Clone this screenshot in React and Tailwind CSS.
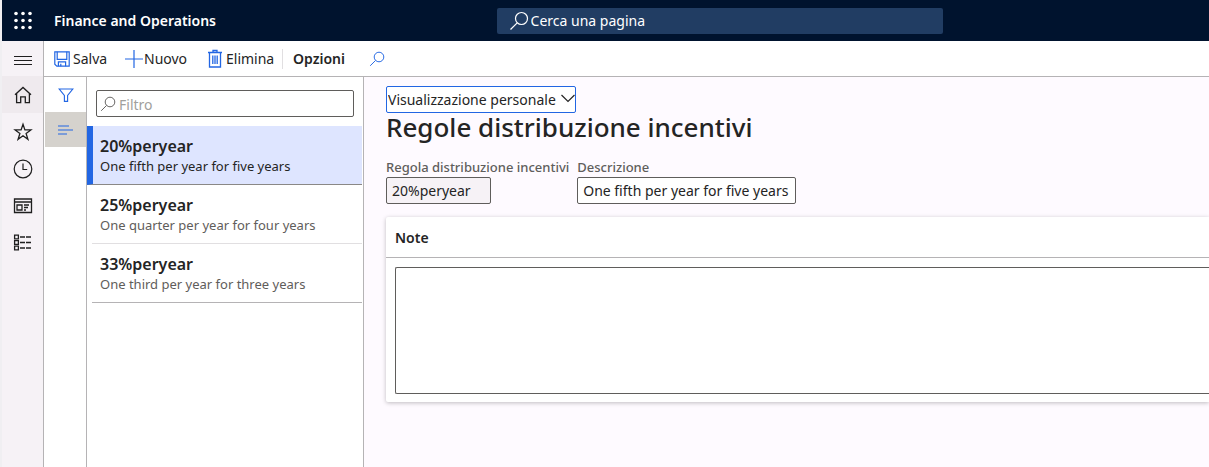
const navItems = [
    { label: 'Home', icon: HomeIcon, active: true },
    { label: 'Preferiti', icon: StarIcon },
    { label: 'Recenti', icon: ClockIcon },
    { label: 'Aree di lavoro', icon: WorkspaceIcon },
    { label: 'Moduli', icon: ModulesIcon },
];

const rules = [
    { id: '20%peryear', description: 'One fifth per year for five years' },
    { id: '25%peryear', description: 'One quarter per year for four years' },
    { id: '33%peryear', description: 'One third per year for three years' },
];

function Icon({ className = 'h-5 w-5', children, ...props }) {
    return (
        <svg
            viewBox="0 0 20 20"
            fill="none"
            stroke="currentColor"
            strokeWidth="1.2"
            aria-hidden="true"
            className={`shrink-0 ${className}`}
            {...props}
        >
            {children}
        </svg>
    );
}

function WaffleIcon() {
    return (
        <Icon fill="currentColor" stroke="none">
            {[2.5, 9.5, 16.5].map((y) =>
                [2, 9, 16].map((x) => <circle key={`${x}-${y}`} cx={x} cy={y} r="1.8" />)
            )}
        </Icon>
    );
}

function MenuIcon() {
    return (
        <Icon shapeRendering="crispEdges" strokeWidth="1">
            <path d="M1 7h18M1 11h18M1 15h18" />
        </Icon>
    );
}

function HomeIcon() {
    return (
        <Icon strokeWidth="1.3">
            <path d="M2 9.8 10 2.4l8 7.4" />
            <path d="M3.6 8.6v9h4.1v-5.8h4.6v5.8h4.1v-9" />
        </Icon>
    );
}

function StarIcon() {
    return (
        <Icon strokeWidth="1.3">
            <path d="m10 2.2 1.9 5.7h6l-4.8 3.6 1.8 5.8-4.9-3.6-4.9 3.6 1.8-5.8-4.8-3.6h6z" />
        </Icon>
    );
}

function ClockIcon() {
    return (
        <Icon>
            <circle cx="10" cy="10" r="8.8" />
            <path d="M10 4.5v6h4.2" />
        </Icon>
    );
}

function WorkspaceIcon() {
    return (
        <Icon strokeWidth="1.3">
            <path d="M1.5 3h17v13.5h-17zM1.5 6h17" />
            <path d="M4 9h5v5H4zM11 9h5M11 11.5h4M11 14h2" />
        </Icon>
    );
}

function ModulesIcon() {
    return (
        <Icon strokeWidth="1.3">
            <path d="M1.6 2.1h3.8v3.8H1.6zM1.6 7.6h3.8v3.8H1.6zM1.6 13.1h3.8v3.8H1.6z" />
            <path d="M7 4h5M13 4h5M7 9.5h5M13 9.5h5M7 15h5M13 15h5" />
        </Icon>
    );
}

function SearchIcon({ className }) {
    return (
        <Icon className={className}>
            <circle cx="12.5" cy="7.5" r="6" />
            <path d="M8.2 11.8 1.5 18.5" />
        </Icon>
    );
}

function SaveIcon() {
    return (
        <Icon className="h-4 w-4" strokeWidth="1.5">
            <path d="M1 1h18v18H3.5L1 16.5z" />
            <path d="M4 1v9.5h12V1M5.5 19v-5.5h9V19M8.5 19v-3" />
        </Icon>
    );
}

function PlusIcon() {
    return (
        <Icon>
            <path d="M1 10h18M10 1v18" />
        </Icon>
    );
}

function TrashIcon() {
    return (
        <Icon strokeWidth="1.3">
            <path d="M2 3.5h14M7 3.5v-2h4v2" />
            <path d="M3.5 3.5V18h11V3.500M6.8 6.5V15M9 6.500V15M11.2 6.500V15" />
        </Icon>
    );
}

function FilterIcon() {
    return (
        <Icon className="h-4 w-4" strokeWidth="1.4">
            <path d="M1.500 2.500h17L12 10.500v7.500H8v-7.500z" />
        </Icon>
    );
}

function LinesIcon() {
    return (
        <Icon className="h-4 w-4" viewBox="0 0 16 16" strokeWidth="1">
            <path d="M0 4h11M0 8h15M0 12h9" />
        </Icon>
    );
}

function TopBar() {
    return (
        <header className="flex h-[41px] items-center bg-[#00132e] pl-2 text-white">
            <div className="flex w-2/5 items-center">
                <button type="button" aria-label="App" className="flex w-7 justify-center">
                    <WaffleIcon />
                </button>
                <span className="ml-4 text-sm font-semibold">Finance and Operations</span>
            </div>
            <label className="ml-[7px] flex h-[26px] w-[446px] items-center rounded-xs bg-[#213d63] pl-3">
                <SearchIcon className="h-5 w-5" />
                <input
                    type="search"
                    aria-label="Cerca una pagina"
                    placeholder="Cerca una pagina"
                    className="ml-0.5 min-w-0 flex-1 bg-transparent text-sm outline-none placeholder:text-white"
                />
            </label>
        </header>
    );
}

function SideNav() {
    return (
        <nav className="flex w-[42px] shrink-0 flex-col border-r border-[#b5b3b5] bg-[#f6f2f6] text-[#1f1f1f]">
            <button type="button" aria-label="Menu" className="flex h-[35px] items-center justify-center">
                <MenuIcon />
            </button>
            {navItems.map(({ label, icon: NavIcon, active }) => (
                <a
                    key={label}
                    href="#"
                    aria-label={label}
                    className={`flex h-[37px] items-center justify-center ${active ? 'bg-[#efeaee]' : ''}`}
                >
                    <NavIcon />
                </a>
            ))}
        </nav>
    );
}

function ActionBar() {
    return (
        <div className="flex h-9 items-center border-b border-[#b5b3b5] bg-white pl-2.5 text-sm text-[#242424]">
            <button type="button" className="flex w-[70px] items-center gap-[3px]">
                <span className="text-[#2266e3]"><SaveIcon /></span>
                Salva
            </button>
            <button type="button" className="flex w-[82px] items-center">
                <span className="text-[#2266e3]"><PlusIcon /></span>
                Nuovo
            </button>
            <button type="button" className="flex w-[76px] items-center">
                <span className="text-[#2266e3]"><TrashIcon /></span>
                Elimina
            </button>
            <button type="button" className="border-l border-[#e1dfe1] pl-2.5 font-semibold">
                Opzioni
            </button>
            <button type="button" aria-label="Cerca" className="ml-6 text-[#2266e3]">
                <SearchIcon className="h-4 w-4" />
            </button>
        </div>
    );
}

function RuleList() {
    return (
        <section className="w-[277px] shrink-0 border-r border-[#b5b3b5] bg-white pr-px">
            <label className="mr-2 ml-[9px] mt-[13px] mb-[9px] flex h-[27px] items-center rounded-xs border border-[#5f5d5b] pl-[3px] text-[#605e5c]">
                <SearchIcon className="h-4 w-4" />
                <input
                    type="text"
                    aria-label="Filtro"
                    placeholder="Filtro"
                    className="ml-[3px] min-w-0 flex-1 bg-transparent pt-0.5 text-sm outline-none placeholder:text-[#a19f9d]"
                />
            </label>
            <ul>
                {rules.map((rule, i) => (
                    <li key={rule.id} className={i === 0 ? '' : 'pl-[5px]'}>
                        <button
                            type="button"
                            className={`block h-[59px] w-full border-b pt-0.5 text-left ${i === 0
                                ? 'border-b-[#8a8886] border-l-6 border-l-[#2266e3] bg-[#dee5ff] pl-[7px] text-[#242424]'
                                : 'pl-2 text-[#5f5d5b]'
                                } ${i === 1 ? 'border-b-[#e1dfe1]' : ''} ${i === 2 ? 'border-b-[#b5b3b5]' : ''}`}
                        >
                            <span className="block text-base leading-5 font-semibold text-[#242424]">{rule.id}</span>
                            <span className="block text-[13px] leading-5">{rule.description}</span>
                        </button>
                    </li>
                ))}
            </ul>
        </section>
    );
}

function RuleDetails() {
    return (
        <main className="min-w-0 flex-1 bg-[#fefaff] pt-[9px] pl-[22px] text-[#242424]">
            <div className="relative w-[190px]">
                <select
                    aria-label="Visualizzazione"
                    className="block h-[27px] w-full appearance-none rounded-xs border border-[#2266e3] bg-white pl-px text-sm"
                >
                    <option>Visualizzazione personale</option>
                </select>
                <svg
                    viewBox="0 0 16 16"
                    fill="none"
                    stroke="currentColor"
                    strokeWidth="1.2"
                    aria-hidden="true"
                    className="pointer-events-none absolute top-1 right-0 h-4 w-4"
                >
                    <path d="M1.500 5 8 11.500 14.500 5" />
                </svg>
            </div>
            <h1 className="text-[26px] leading-7 font-medium">Regole distribuzione incentivi</h1>

            <div className="mt-4 flex gap-2">
                <div>
                    <label htmlFor="rule" className="block text-[13px] leading-5 font-medium text-[#605e5c]">
                        Regola distribuzione incentivi
                    </label>
                    <input
                        id="rule"
                        readOnly
                        defaultValue="20%peryear"
                        className="block h-[27px] w-[105px] rounded-xs border border-[#5f5d5b] bg-[#f6f2f6] px-[5px] text-sm"
                    />
                </div>
                <div>
                    <label htmlFor="description" className="block text-[13px] leading-5 font-medium text-[#605e5c]">
                        Descrizione
                    </label>
                    <input
                        id="description"
                        defaultValue="One fifth per year for five years"
                        className="block h-[27px] w-[219px] rounded-xs border border-[#5f5d5b] bg-white px-[5px] text-sm"
                    />
                </div>
            </div>

            <section className="mt-[13px] rounded-l-xs bg-white pb-2 shadow-[0_1px_4px_rgba(0,0,0,0.25)]">
                <h2 className="h-[41px] border-b border-[#b5b3b5] pl-[9px] text-sm leading-[41px] font-semibold">
                    <label htmlFor="notes">Note</label>
                </h2>
                <div className="pt-[9px] pl-[9px]">
                    <textarea
                        id="notes"
                        className="block h-[127px] w-full resize-none rounded-l-xs border border-r-0 border-[#5f5d5b] bg-white p-1 text-sm"
                    />
                </div>
            </section>
        </main>
    );
}

function App() {
    return (
        <div className="flex min-h-screen flex-col overflow-hidden border-l-2 border-[#f0eff2] bg-white font-['Noto_Sans','Open_Sans',sans-serif]">
            <TopBar />
            <div className="flex flex-1">
                <SideNav />
                <div className="flex min-w-0 flex-1 flex-col">
                    <ActionBar />
                    <div className="flex flex-1">
                        <div className="flex w-[43px] shrink-0 flex-col border-r border-[#b5b3b5] pl-px text-[#2266e3]">
                            <button type="button" aria-label="Filtri" className="flex h-[35px] items-center justify-center">
                                <FilterIcon />
                            </button>
                            <button type="button" aria-label="Elenco" className="flex h-[35px] items-center justify-center bg-[#d5d2cd]">
                                <LinesIcon />
                            </button>
                        </div>
                        <RuleList />
                        <RuleDetails />
                    </div>
                </div>
            </div>
        </div>
    );
}

export default App;
